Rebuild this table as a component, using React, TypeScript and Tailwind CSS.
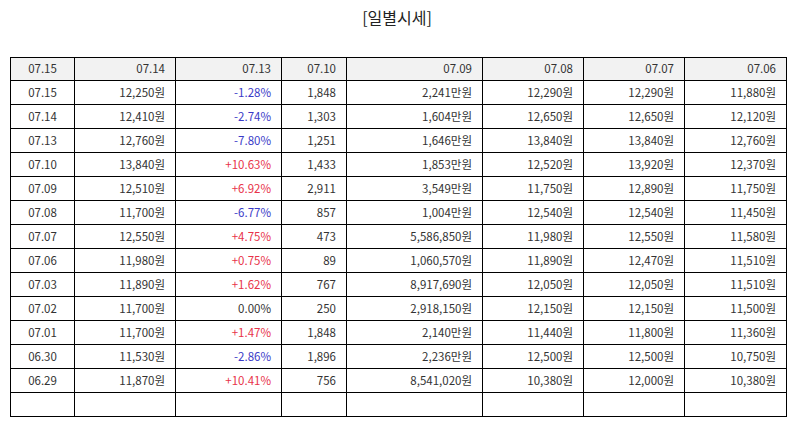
const headers = ["07.15", "07.14", "07.13", "07.10", "07.09", "07.08", "07.07", "07.06"];

const rows: string[][] = [
  ["07.15", "12,250원", "-1.28%", "1,848", "2,241만원", "12,290원", "12,290원", "11,880원"],
  ["07.14", "12,410원", "-2.74%", "1,303", "1,604만원", "12,650원", "12,650원", "12,120원"],
  ["07.13", "12,760원", "-7.80%", "1,251", "1,646만원", "13,840원", "13,840원", "12,760원"],
  ["07.10", "13,840원", "+10.63%", "1,433", "1,853만원", "12,520원", "13,920원", "12,370원"],
  ["07.09", "12,510원", "+6.92%", "2,911", "3,549만원", "11,750원", "12,890원", "11,750원"],
  ["07.08", "11,700원", "-6.77%", "857", "1,004만원", "12,540원", "12,540원", "11,450원"],
  ["07.07", "12,550원", "+4.75%", "473", "5,586,850원", "11,980원", "12,550원", "11,580원"],
  ["07.06", "11,980원", "+0.75%", "89", "1,060,570원", "11,890원", "12,470원", "11,510원"],
  ["07.03", "11,890원", "+1.62%", "767", "8,917,690원", "12,050원", "12,050원", "11,510원"],
  ["07.02", "11,700원", "0.00%", "250", "2,918,150원", "12,150원", "12,150원", "11,500원"],
  ["07.01", "11,700원", "+1.47%", "1,848", "2,140만원", "11,440원", "11,800원", "11,360원"],
  ["06.30", "11,530원", "-2.86%", "1,896", "2,236만원", "12,500원", "12,500원", "10,750원"],
  ["06.29", "11,870원", "+10.41%", "756", "8,541,020원", "10,380원", "12,000원", "10,380원"],
];

const widths = ["w-[64px]", "w-[101px]", "w-[106px]", "w-[65px]", "w-[136px]", "w-[101px]", "w-[101px]", "w-[102px]"];

function rateColor(v: string) {
  if (v.startsWith("+")) return "text-[#e8334a]";
  if (v.startsWith("-")) return "text-[#3b3bc8]";
  return "text-[#333]";
}

export default function App() {
  return (
    <div className="w-[794px] h-[425px] bg-white text-[#333] font-['Noto_Sans_CJK_KR','Noto_Sans',sans-serif]">
      <h1 className="pt-[5px] h-[57px] text-center text-[16px] leading-[24px] font-normal text-[#222]">
        [일별시세]
      </h1>
      <table className="ml-[10px] w-[776px] border-collapse table-fixed text-[11.5px]">
        <colgroup>
          {widths.map((w, i) => (
            <col key={i} className={w} />
          ))}
        </colgroup>
        <thead>
          <tr className="h-[23px] bg-[#f2f2f2]">
            {headers.map((h, i) => (
              <th
                key={i}
                className={`border border-black font-normal pl-[7px] pr-[10px] py-0 ${i === 0 ? "text-center !px-0" : "text-right"}`}
              >
                {h}
              </th>
            ))}
          </tr>
        </thead>
        <tbody>
          {rows.map((r, ri) => (
            <tr key={ri} className="h-[24px]">
              {r.map((c, ci) => (
                <td
                  key={ci}
                  className={`border border-black pl-[7px] pr-[10px] py-0 ${ci === 0 ? "text-center !px-0" : "text-right"} ${ci === 2 ? rateColor(c) : ""}`}
                >
                  {c}
                </td>
              ))}
            </tr>
          ))}
          <tr className="h-[24px]">
            {headers.map((_, i) => (
              <td key={i} className="border border-black" />
            ))}
          </tr>
        </tbody>
      </table>
    </div>
  );
}
